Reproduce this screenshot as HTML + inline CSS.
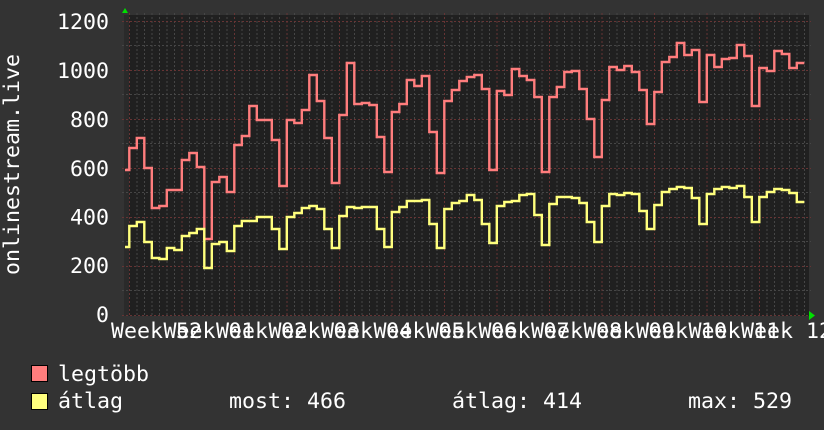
<!DOCTYPE html>
<html><head><meta charset="utf-8"><style>
html,body{margin:0;padding:0;background:#333;width:824px;height:430px;overflow:hidden}
svg{display:block}
text{font-family:"DejaVu Sans Mono","Liberation Mono",monospace;font-size:21.6px;fill:#fff}
</style></head><body>
<svg width="824" height="430" viewBox="0 0 824 430" xmlns="http://www.w3.org/2000/svg">
<rect width="824" height="430" fill="#333"/>
<rect x="124" y="15" width="685" height="301" fill="#202020"/>
<rect x="124" y="15" width="5" height="301" fill="#2a2a2a"/>
<g stroke="#464646" stroke-width="1" stroke-dasharray="2 2" fill="none" shape-rendering="crispEdges">
<path d="M136.8 13V317M144.3 13V317M151.8 13V317M159.3 13V317M166.8 13V317M174.3 13V317M189.3 13V317M196.8 13V317M204.3 13V317M211.8 13V317M219.3 13V317M226.8 13V317M241.8 13V317M249.3 13V317M256.8 13V317M264.3 13V317M271.8 13V317M279.3 13V317M294.3 13V317M301.8 13V317M309.3 13V317M316.8 13V317M324.3 13V317M331.8 13V317M346.8 13V317M354.3 13V317M361.8 13V317M369.3 13V317M376.8 13V317M384.3 13V317M399.3 13V317M406.8 13V317M414.3 13V317M421.8 13V317M429.3 13V317M436.8 13V317M451.8 13V317M459.3 13V317M466.8 13V317M474.3 13V317M481.8 13V317M489.3 13V317M504.3 13V317M511.8 13V317M519.3 13V317M526.8 13V317M534.3 13V317M541.8 13V317M556.8 13V317M564.3 13V317M571.8 13V317M579.3 13V317M586.8 13V317M594.3 13V317M609.3 13V317M616.8 13V317M624.3 13V317M631.8 13V317M639.3 13V317M646.8 13V317M661.8 13V317M669.3 13V317M676.8 13V317M684.3 13V317M691.8 13V317M699.3 13V317M714.3 13V317M721.8 13V317M729.3 13V317M736.8 13V317M744.3 13V317M751.8 13V317M766.8 13V317M774.3 13V317M781.8 13V317M789.3 13V317M796.8 13V317M804.3 13V317"/>
<path d="M122 45.500H811M122 94.500H811M122 143.500H811M122 192.500H811M122 241.500H811M122 290.500H811"/>
</g>
<g stroke="#663434" stroke-width="1" stroke-dasharray="2 2" fill="none" shape-rendering="crispEdges">
<path d="M129.3 13V317M181.8 13V317M234.3 13V317M286.8 13V317M339.3 13V317M391.8 13V317M444.3 13V317M496.8 13V317M549.3 13V317M601.8 13V317M654.3 13V317M706.8 13V317M759.3 13V317"/>
<path d="M122 21.500H811M122 70.500H811M122 119.500H811M122 168.500H811M122 217.500H811M122 266.500H811M122 315.500H811"/>
</g>
<path fill="none" stroke="#ff7d7d" stroke-width="2.4" d="M125 170H129.3V148h7.5V138h7.5V168h7.5V208h7.5V206h7.5V190h15V160h7.5V153h7.5V167h7.5V239h7.5V182h7.5V177h7.5V192h7.5V145h7.5V136h7.5V106h7.5V120h15V140h7.5V186h7.5V120h7.5V123h7.5V110h7.5V75h7.5V101h7.5V138h7.5V183h7.5V115h7.5V63h7.5V104h7.5V103h7.5V105h7.5V137h7.5V172h7.5V112h7.5V104h7.5V80h7.5V86h7.5V76h7.5V132h7.5V173h7.5V101h7.5V90h7.5V81h7.5V77h7.5V75h7.5V89h7.5V170h7.5V91h7.5V95h7.5V69h7.5V76h7.5V80h7.5V97h7.5V172h7.5V97h7.5V87h7.5V72h7.5V71h7.5V89h7.5V119h7.5V157h7.5V100h7.5V67h7.5V70h7.5V66h7.5V72h7.5V90h7.5V124h7.5V92h7.5V62h7.5V57h7.5V43h7.5V55h7.5V50h7.5V102h7.5V55h7.5V67h7.5V59h7.5V58h7.5V45h7.5V56h7.5V106h7.5V68h7.5V71h7.5V51h7.5V54h7.5V68h7.5V63h7.5"/>
<path fill="none" stroke="#ffff7d" stroke-width="2.4" d="M125 247H129.3V226h7.5V222h7.5V242h7.5V258h7.5V259h7.5V248h7.5V250h7.5V236h7.5V233h7.5V229h7.5V268h7.5V244h7.5V242h7.5V251h7.5V226h7.5V221h15V217h15V229h7.5V249h7.5V217h7.5V213h7.5V208h7.5V206h7.5V209h7.5V229h7.5V248h7.5V216h7.5V207h7.5V208h7.5V207h15V229h7.5V247h7.5V212h7.5V207h7.5V201h15V200h7.5V224h7.5V248h7.5V209h7.5V203h7.5V201h7.5V195h7.5V200h7.5V224h7.5V243h7.5V206h7.5V202h7.5V201h7.5V195h7.5V194h7.5V215h7.5V245h7.5V204h7.5V197h15V198h7.5V203h7.5V222h7.5V242h7.5V206h7.5V194h7.5V195h7.5V193h7.5V194h7.5V211h7.5V229h7.5V205h7.5V192h7.5V189h7.5V187h7.5V188h7.5V198h7.5V224h7.5V194h7.5V189h7.5V187h7.5V188h7.5V186h7.5V197h7.5V222h7.5V197h7.5V192h7.5V189h7.5V190h7.5V193h7.5V202h7.5"/>
<path d="M125 8L122 13H128Z" fill="#00e000"/>
<path d="M809 311V320L815 315.5Z" fill="#00e000"/>
<g text-anchor="end">
<text x="109" y="29">1200</text>
<text x="109" y="78">1000</text>
<text x="109" y="127">800</text>
<text x="109" y="176">600</text>
<text x="109" y="224.5">400</text>
<text x="109" y="273">200</text>
<text x="109" y="322">0</text>
</g>
<text transform="translate(19,275) rotate(-90)">onlinestream.live</text>
<g>
<text x="111" y="338" xml:space="preserve">Week 52</text>
<text x="163.5" y="338" xml:space="preserve">Week 01</text>
<text x="216" y="338" xml:space="preserve">Week 02</text>
<text x="268.5" y="338" xml:space="preserve">Week 03</text>
<text x="321" y="338" xml:space="preserve">Week 04</text>
<text x="373.5" y="338" xml:space="preserve">Week 05</text>
<text x="426" y="338" xml:space="preserve">Week 06</text>
<text x="478.5" y="338" xml:space="preserve">Week 07</text>
<text x="531" y="338" xml:space="preserve">Week 08</text>
<text x="583.5" y="338" xml:space="preserve">Week 09</text>
<text x="636" y="338" xml:space="preserve">Week 10</text>
<text x="688.5" y="338" xml:space="preserve">Week 11</text>
<text x="741" y="338" xml:space="preserve">Week 12</text>
</g>
<rect x="31.500" y="365.500" width="16" height="16" fill="#ff7d7d" stroke="#000"/>
<rect x="31.500" y="393.500" width="16" height="16" fill="#ffff7d" stroke="#000"/>
<text x="58" y="381">legtöbb</text>
<text x="58" y="408">átlag</text>
<text x="229" y="408">most: 466</text>
<text x="452" y="408">átlag: 414</text>
<text x="688" y="408">max: 529</text>
</svg>
</body></html>
